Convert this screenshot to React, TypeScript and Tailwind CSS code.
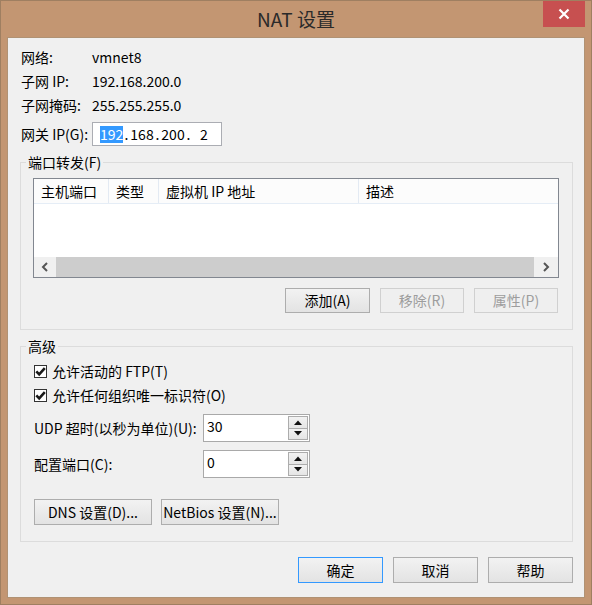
import React from 'react';

const Btn = ({ children, className = '', disabled = false }: { children: React.ReactNode; className?: string; disabled?: boolean }) => (
  <div
    className={
      'flex items-center justify-center border ' +
      (disabled
        ? 'border-[#d0d0d0] bg-[#efefef] text-[#9d9d9d] '
        : 'border-[#adadad] bg-linear-to-b from-[#f2f2f2] to-[#e3e3e3] text-black ') +
      className
    }
  >
    {children}
  </div>
);

const Check = ({ label }: { label: string }) => (
  <div className="flex h-[24px] items-center">
    <div className="flex h-[13px] w-[13px] items-center justify-center border border-[#333333] bg-white">
      <svg width="11" height="11" viewBox="0 0 11 11">
        <path d="M1.3 5.4 L4.2 8.4 L9.8 2.2" fill="none" stroke="#1a1a1a" strokeWidth="2.6" />
      </svg>
    </div>
    <span className="ml-[5px]">{label}</span>
  </div>
);

const Spin = ({ value }: { value: string }) => (
  <div className="flex h-[28px] w-[107px] border border-[#a9a9a9] bg-white">
    <div className="flex-1 pl-[3px] pt-[1px] leading-[20px]">{value}</div>
    <div className="my-[1px] mr-[1px] flex w-[20px] flex-col">
      <div className="flex h-[13px] items-center justify-center border border-[#acacac] bg-linear-to-b from-[#f2f2f2] to-[#e5e5e5]">
        <svg width="8" height="5" viewBox="0 0 8 5">
          <path d="M0 5 L4 0.5 L8 5 Z" fill="#111" />
        </svg>
      </div>
      <div className="flex h-[12px] items-center justify-center border border-t-0 border-[#acacac] bg-linear-to-b from-[#f2f2f2] to-[#e5e5e5]">
        <svg width="8" height="5" viewBox="0 0 8 5">
          <path d="M0 0 L8 0 L4 4.5 Z" fill="#111" />
        </svg>
      </div>
    </div>
  </div>
);

const Group = ({ title, className, children }: { title: string; className: string; children: React.ReactNode }) => (
  <div className={'relative ml-[12px] w-[553px] border border-[#dcdcdc] ' + className}>
    <span className="absolute left-[5px] top-[-11px] bg-[#f0f0f0] px-[2px] leading-[20px]">{title}</span>
    {children}
  </div>
);

export default function App() {
  return (
    <div className="flex h-[605px] w-[592px] flex-col border border-[#9f7f61] bg-[#c39672] font-['Noto_Sans_CJK_SC',sans-serif] text-[14px] text-black">
      {/* title bar */}
      <div className="relative flex h-[36px] items-center justify-center">
        <span className="text-[19px] text-[#2a2a2a]">NAT 设置</span>
        <div className="absolute right-[6px] top-0 flex h-[26px] w-[42px] items-center justify-center bg-[#c75050]">
          <svg width="12" height="12" viewBox="0 0 12 12">
            <path d="M1.5 1.5 L10.5 10.5 M10.5 1.5 L1.5 10.5" stroke="#fff" strokeWidth="2.2" />
          </svg>
        </div>
      </div>

      <div className="ml-[6px] h-[561px] w-[578px] border border-[#b09274] bg-[#f0f0f0] pt-[7px]">
        <div className="grid grid-cols-[71px_1fr] pl-[13px]">
          <div className="flex h-[24px] items-center">网络:</div>
          <div className="flex h-[24px] items-center">vmnet8</div>
          <div className="flex h-[24px] items-center">子网 IP:</div>
          <div className="flex h-[24px] items-center">192.168.200.0</div>
          <div className="flex h-[25px] items-center">子网掩码:</div>
          <div className="flex h-[25px] items-center">255.255.255.0</div>
          <div className="mt-[4px] flex h-[24px] items-center">网关 IP(G):</div>
          <div className="mt-[4px] flex h-[24px] w-[130px] items-center border border-[#abadb3] bg-white pl-[7px]">
            <span className="w-[23px] bg-[#3399ff] text-center leading-[17px] text-white">192</span>
            <span className="w-[7px] text-center">.</span>
            <span className="w-[24px] text-center">168</span>
            <span className="w-[7px] text-center">.</span>
            <span className="w-[24px] text-center">200</span>
            <span className="w-[7px] text-center">.</span>
            <span className="w-[24px] text-center">2</span>
          </div>
        </div>

        <Group title="端口转发(F)" className="mt-[16px] h-[168px] pl-[12px] pt-[15px]">
          <div className="flex h-[100px] w-[526px] flex-col border border-[#828790] bg-white">
            <div className="flex h-[25px] border-b border-[#e5edf6] bg-[#fcfcfc] leading-[24px]">
              <div className="w-[75px] border-r border-[#e3eaf3] pl-[7px]">主机端口</div>
              <div className="w-[50px] border-r border-[#e3eaf3] pl-[7px]">类型</div>
              <div className="w-[200px] border-r border-[#e3eaf3] pl-[7px]">虚拟机 IP 地址</div>
              <div className="flex-1 pl-[7px]">描述</div>
            </div>
            <div className="flex-1" />
            <div className="flex h-[20px] bg-[#f0f0f0]">
              <div className="flex w-[22px] items-center justify-center">
                <svg width="8" height="10" viewBox="0 0 8 10">
                  <path d="M6 1 L2 5 L6 9" fill="none" stroke="#555" strokeWidth="2" />
                </svg>
              </div>
              <div className="flex-1 bg-[#cdcdcd]" />
              <div className="flex w-[24px] items-center justify-center">
                <svg width="8" height="10" viewBox="0 0 8 10">
                  <path d="M2 1 L6 5 L2 9" fill="none" stroke="#555" strokeWidth="2" />
                </svg>
              </div>
            </div>
          </div>
          <div className="mt-[10px] flex w-[526px] justify-end gap-[10px] pr-[1px]">
            <Btn className="h-[25px] w-[85px]">添加(A)</Btn>
            <Btn className="h-[25px] w-[84px]" disabled>移除(R)</Btn>
            <Btn className="h-[25px] w-[84px]" disabled>属性(P)</Btn>
          </div>
        </Group>

        <Group title="高级" className="mt-[16px] h-[196px] pl-[13px] pt-[12px]">
          <Check label="允许活动的 FTP(T)" />
          <Check label="允许任何组织唯一标识符(O)" />
          <div className="mt-[7px] flex h-[28px] items-center">
            <span className="w-[169px]">UDP 超时(以秒为单位)(U):</span>
            <Spin value="30" />
          </div>
          <div className="mt-[8px] flex h-[28px] items-center">
            <span className="w-[169px]">配置端口(C):</span>
            <Spin value="0" />
          </div>
          <div className="mt-[21px] flex gap-[9px]">
            <Btn className="h-[26px] w-[118px]">DNS 设置(D)...</Btn>
            <Btn className="h-[26px] w-[118px]">NetBios 设置(N)...</Btn>
          </div>
        </Group>

        <div className="mt-[15px] flex justify-end gap-[10px] pr-[11px]">
          <Btn className="h-[26px] w-[85px] !border-[#3399ff]">确定</Btn>
          <Btn className="h-[26px] w-[85px]">取消</Btn>
          <Btn className="h-[26px] w-[85px]">帮助</Btn>
        </div>
      </div>
    </div>
  );
}
